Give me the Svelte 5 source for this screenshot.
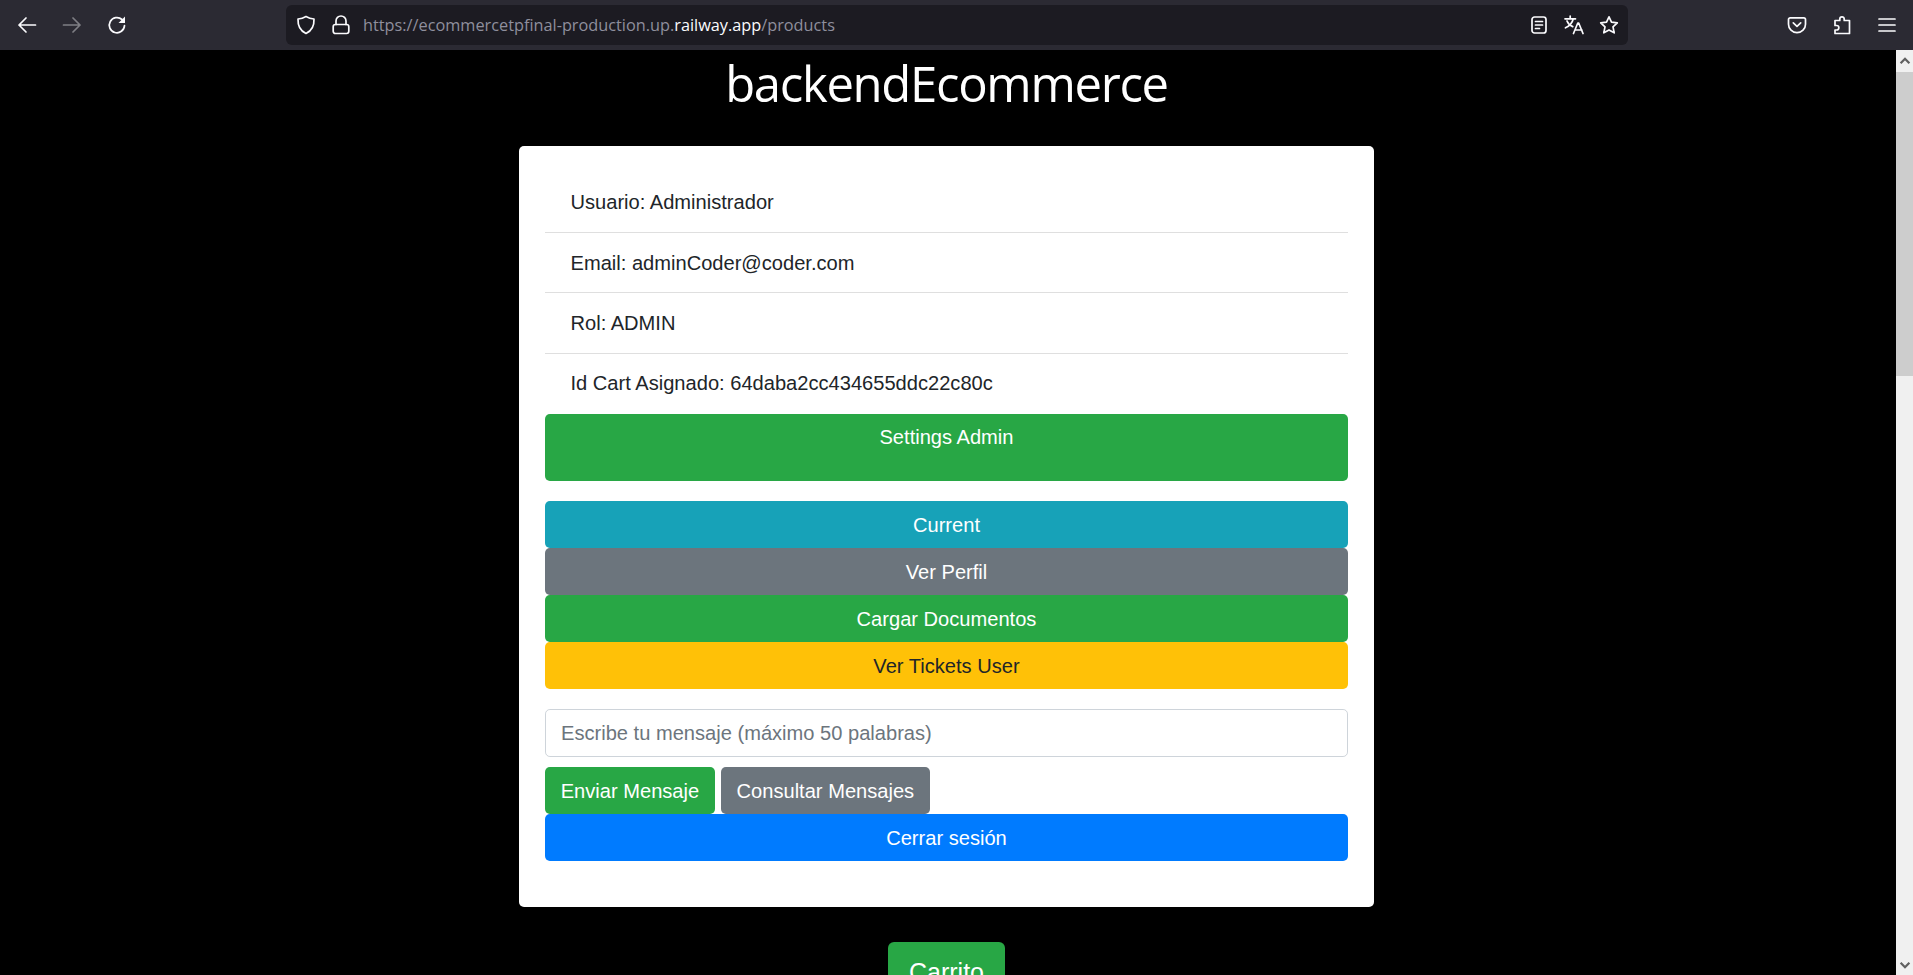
<script>
  const profile = ['Usuario: Administrador', 'Email: adminCoder@coder.com', 'Rol: ADMIN', 'Id Cart Asignado: 64daba2cc434655ddc22c80c'];
  const actions = [
    { label: 'Current', kind: 'info' },
    { label: 'Ver Perfil', kind: 'secondary' },
    { label: 'Cargar Documentos', kind: 'success' },
    { label: 'Ver Tickets User', kind: 'warning' }
  ];
</script>

<div class="window">
  <header class="toolbar">
    <span class="tool">
      <svg viewBox="0 0 20 20"><path d="M18.5 10H2M9 3l-7 7 7 7" /></svg>
    </span>
    <span class="tool dim">
      <svg viewBox="0 0 20 20"><path d="M1.5 10H18M11 3l7 7-7 7" /></svg>
    </span>
    <span class="tool">
      <svg viewBox="0 0 20 20"><path d="M17.5 10.500a7.600 7.600 0 1 1-2.500-6" /><path class="solid" d="M18 1.500v6.500h-6.500z" /></svg>
    </span>

    <div class="urlbar">
      <span class="slot">
        <svg viewBox="0 0 20 20"><path d="M10 1.500c2.600 1.600 5 2.300 8 2.500.3 6.800-2.400 11.900-8 14.500C4.400 15.900 1.700 10.800 2 4c3-.2 5.400-.9 8-2.500z" /></svg>
      </span>
      <span class="slot">
        <svg viewBox="0 0 20 20"><path d="M5 9.500V6a5 5 0 0 1 10 0v3.500" /><rect x="2.200" y="9.500" width="15.600" height="9" rx="2.200" /></svg>
      </span>
      <span class="url">https://ecommercetpfinal-production.up.<b>railway.app</b>/products</span>
      <span class="slot push">
        <svg viewBox="0 0 20 20"><rect x="3" y="2" width="14" height="16" rx="2.500" /><path d="M6.500 6.500h7M6.500 10h7M6.500 13.500h4" /></svg>
      </span>
      <span class="slot">
        <svg viewBox="0 0 20 20"><path d="M1 3.800h10.500M6.200 1v2.800M9.300 3.800C8.300 8 5.600 11 1.500 12.800M3 6c1 2.600 3 4.500 5.700 5.600M9.500 18.500l4.300-10.500h.9l4.300 10.500M11 15h7" /></svg>
      </span>
      <span class="slot">
        <svg viewBox="0 0 20 20"><path d="M10 1.800l2.500 5.400 5.800.7-4.300 4 1.200 5.900L10 14.900l-5.200 2.900L6 11.900l-4.300-4 5.800-.7z" /></svg>
      </span>
    </div>

    <span class="tool">
      <svg viewBox="0 0 20 20"><path d="M3.200 2.800h13.600a1.700 1.700 0 0 1 1.700 1.700v4.700a8.500 8.500 0 0 1-17 0V4.500a1.700 1.700 0 0 1 1.700-1.700z" /><path d="M6.300 7.800L10 11.300l3.700-3.500" /></svg>
    </span>
    <span class="tool">
      <svg viewBox="0 0 20 20"><path d="M7.800 5.500V4a2.200 2.200 0 0 1 4.400 0v1.500h5.300v13H3v-3.500h1.600a2 2 0 0 0 0-4.500H3V5.500z" /></svg>
    </span>
    <span class="tool">
      <svg viewBox="0 0 20 20"><path d="M2 4h16M2 10h16M2 16h16" /></svg>
    </span>
  </header>

  <div class="viewport">
    <main class="page">
      <h1>backendEcommerce</h1>

      <section class="card">
        <ul class="list">
          {#each profile as row}
            <li>{row}</li>
          {/each}
        </ul>

        <button class="btn success block tall">Settings Admin</button>

        <div class="actions">
          {#each actions as a}
            <button class="btn block {a.kind}">{a.label}</button>
          {/each}
        </div>

        <input class="message" type="text" placeholder="Escribe tu mensaje (máximo 50 palabras)" />

        <div class="send">
          <button class="btn success">Enviar Mensaje</button>
          <button class="btn secondary">Consultar Mensajes</button>
        </div>
        <button class="btn block primary">Cerrar sesión</button>
      </section>

      <button class="btn success large">Carrito</button>
    </main>

    <aside class="scrollbar">
      <span class="arrow"><svg viewBox="0 0 16 16"><path d="M3 10.500l5-5 5 5" /></svg></span>
      <span class="thumb"></span>
      <span class="rest"></span>
      <span class="arrow end"><svg viewBox="0 0 16 16"><path d="M3 5.500l5 5 5-5" /></svg></span>
    </aside>
  </div>
</div>

<style>
  :global(body) { margin: 0; background: #000; overflow: hidden; }

  .window { display: flex; flex-direction: column; height: 975px; font-family: "Liberation Sans", Arial, sans-serif; }

  /* browser chrome */
  .toolbar { display: flex; align-items: center; flex: 0 0 50px; height: 50px; padding: 0 4px; box-sizing: border-box; background: #2b2a33; color: #fbfbfe; }
  .tool { flex: 0 0 45px; display: flex; justify-content: center; align-items: center; }
  .tool.dim { opacity: 0.4; }
  svg { width: 20px; height: 20px; fill: none; stroke: currentColor; stroke-width: 1.7; stroke-linejoin: round; stroke-linecap: round; }
  svg .solid { fill: currentColor; stroke: none; }

  .urlbar { flex: 1; display: flex; align-items: center; height: 40px; margin: 0 146px 0 147px; padding: 0 2px; border-radius: 6px; background: #1c1b22; }
  .slot { flex: 0 0 35px; display: flex; justify-content: center; align-items: center; }
  .push { margin-left: auto; }
  .url { margin-left: 5px; font-family: "Open Sans", sans-serif; font-size: 16.300px; color: #8f8f9d; white-space: nowrap; }
  .url b { font-weight: 400; color: #fbfbfe; }

  .viewport { flex: 1; display: flex; min-height: 0; }
  .page { flex: 1; min-width: 0; display: flex; flex-direction: column; align-items: center; padding-right: 3px; overflow: hidden; background: #000; }

  h1 { margin: 4px 0 33px; font-family: "Open Sans", sans-serif; font-size: 49px; font-weight: 400; line-height: 59px; letter-spacing: -1.300px; color: #fff; }

  .card { width: 855px; box-sizing: border-box; padding: 26.500px 26px 46px; background: #fff; border-radius: 5px; color: #212529; font-size: 20.100px; line-height: 30px; }

  .list { margin: 0; padding: 0; list-style: none; }
  .list li { padding: 14.700px 25.500px; border-bottom: 1.200px solid rgba(0, 0, 0, 0.125); }
  .list li:last-child { padding-bottom: 15.700px; border-bottom: 0; }

  .btn { display: inline-block; box-sizing: border-box; height: 47px; padding: 7.300px 14.700px; border: 1.200px solid transparent; border-radius: 4.900px; font: inherit; font-size: 20.100px; line-height: 30px; text-align: center; color: #fff; }
  .block { display: block; width: 100%; }
  .tall { display: flex; justify-content: center; height: 67px; margin-bottom: 20px; }

  .success { background: #28a745; }
  .info { background: #17a2b8; }
  .secondary { background: #6c757d; }
  .warning { background: #ffc107; color: #212529; }
  .primary { background: #007bff; }

  .message { display: block; width: 100%; height: 48px; box-sizing: border-box; margin: 20px 0 10px; padding: 7.300px 15px; border: 1.200px solid #ced4da; border-radius: 4.900px; background: #fff; font: inherit; color: #495057; }
  .message::placeholder { color: #6c757d; opacity: 1; }

  .send { display: flex; gap: 6px; }

  .large { flex: 0 0 auto; height: 60px; margin-top: 35px; padding: 11px 19.600px; font-size: 25px; line-height: 37.500px; border-radius: 6px; }

  /* classic page scrollbar */
  .scrollbar { flex: 0 0 17px; display: flex; flex-direction: column; background: #f0f0f0; color: #606060; }
  .arrow { flex: 0 0 22px; display: flex; justify-content: center; align-items: center; }
  .arrow.end { flex-basis: 21px; }
  .arrow svg { width: 14px; height: 14px; stroke-width: 2.600; stroke-linecap: butt; stroke-linejoin: miter; }
  .thumb { flex: 0 0 304px; background: #cdcdcd; }
  .rest { flex: 1; }
</style>
